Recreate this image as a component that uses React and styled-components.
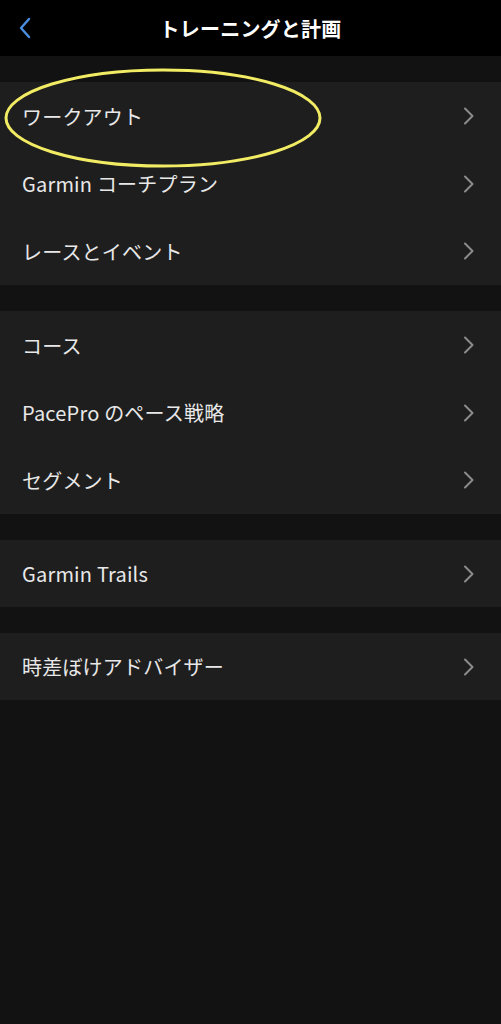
import React from "react";
import styled, { createGlobalStyle } from "styled-components";

const GlobalStyle = createGlobalStyle`
  html, body {
    margin: 0;
    padding: 0;
    background: #121212;
  }
  body {
    font-family: "Noto Sans CJK JP", "Noto Sans", sans-serif;
    color: #e6e6e6;
  }
`;

const Page = styled.div`
  width: 501px;
  min-height: 1024px;
  background: #121212;
  display: flex;
  flex-direction: column;
`;

const Header = styled.header`
  height: 56px;
  background: #000;
  display: flex;
  align-items: center;
  justify-content: center;
  position: relative;
`;

const BackButton = styled.button`
  position: absolute;
  left: 12px;
  top: 13px;
  width: 26px;
  height: 30px;
  padding: 0;
  border: none;
  background: transparent;
  display: flex;
  align-items: center;
  justify-content: center;
`;

const Title = styled.h1`
  margin: 0;
  font-size: 20px;
  font-weight: 700;
  color: #fff;
  letter-spacing: 0.2px;
`;

const Groups = styled.div`
  display: flex;
  flex-direction: column;
  gap: 26px;
  padding-top: 26px;
`;

const Group = styled.section`
  background: #1e1e1e;
  display: flex;
  flex-direction: column;
  position: relative;
`;

const Row = styled.div`
  height: ${(p) => p.$h || 67}px;
  display: flex;
  align-items: center;
  justify-content: space-between;
  padding: 0 26px 0 22px;
`;

const Label = styled.span`
  font-size: 20px;
  font-weight: 400;
  color: #e8e8e8;
  letter-spacing: 0.2px;
`;

const Highlight = styled.svg`
  position: absolute;
  left: 3px;
  top: -14px;
  pointer-events: none;
`;

const Chevron = () => (
  <svg width="12" height="18" viewBox="0 0 12 18">
    <path d="M2 1.5 L9.5 9 L2 16.5" fill="none" stroke="#8c8c8c" strokeWidth="2" strokeLinecap="round" strokeLinejoin="round" />
  </svg>
);

const groups = [
  [
    { label: "ワークアウト", h: 68 },
    { label: "Garmin コーチプラン", h: 67 },
    { label: "レースとイベント", h: 68 },
  ],
  [
    { label: "コース", h: 68 },
    { label: "PacePro のペース戦略", h: 67 },
    { label: "セグメント", h: 68 },
  ],
  [{ label: "Garmin Trails", h: 67 }],
  [{ label: "時差ぼけアドバイザー", h: 67 }],
];

export default function App() {
  return (
    <Page>
      <GlobalStyle />
      <Header>
        <BackButton aria-label="戻る">
          <svg width="16" height="24" viewBox="0 0 16 24">
            <path d="M12 3 L4 12 L12 21" fill="none" stroke="#4a8fe2" strokeWidth="2.4" strokeLinecap="round" strokeLinejoin="round" />
          </svg>
        </BackButton>
        <Title>トレーニングと計画</Title>
      </Header>
      <Groups>
        {groups.map((rows, gi) => (
          <Group key={gi}>
            {gi === 0 && (
              <Highlight width="322" height="102" viewBox="0 0 322 102">
                <ellipse cx="160" cy="50" rx="157" ry="48" fill="none" stroke="#f2ec64" strokeWidth="3" />
              </Highlight>
            )}
            {rows.map((r) => (
              <Row key={r.label} $h={r.h}>
                <Label>{r.label}</Label>
                <Chevron />
              </Row>
            ))}
          </Group>
        ))}
      </Groups>
    </Page>
  );
}
